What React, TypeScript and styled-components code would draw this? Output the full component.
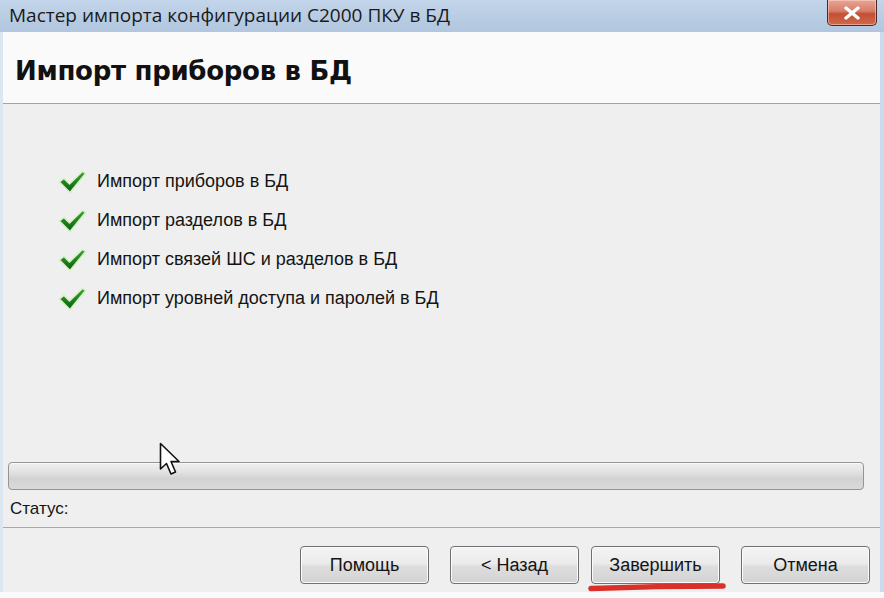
import React from "react";
import styled, { createGlobalStyle } from "styled-components";

const Global = createGlobalStyle`
  html, body { margin: 0; padding: 0; background: #f8f8f8; }
  body { width: 884px; height: 598px; overflow: hidden; }
  * { box-sizing: border-box; }
`;

const Window = styled.div`
  position: relative;
  width: 884px;
  height: 598px;
  display: flex;
  flex-direction: column;
  background: #efefef;
  font-family: "Liberation Sans", Arial, sans-serif;
  color: #111;
`;

const TitleBar = styled.div`
  height: 32px;
  flex: none;
  display: flex;
  align-items: flex-start;
  justify-content: space-between;
  background: linear-gradient(180deg, #c3d5ea 0%, #b7cbe2 60%, #b2c7df 100%);
`;

const TitleText = styled.div`
  font-family: "Open Sans", "Noto Sans", sans-serif;
  font-size: 19px;
  letter-spacing: 0px;
  line-height: 30px;
  padding-left: 9px;
  color: #1a1a1a;
  white-space: nowrap;
`;

const CloseButton = styled.div`
  width: 50px;
  height: 26px;
  margin-right: 7px;
  border: 1px solid #4a2a2a;
  border-top: none;
  border-radius: 0 0 5px 5px;
  background: linear-gradient(180deg, #e9a595 0%, #d77d68 45%, #c44f34 55%, #d0684c 100%);
  display: flex;
  align-items: center;
  justify-content: center;
  box-shadow: inset 0 0 0 1px rgba(255, 220, 210, 0.5);
`;

const Body = styled.div`
  flex: 1;
  display: flex;
  flex-direction: column;
  border-left: 3px solid #dbe6f2;
  border-right: 4px solid #c8dbef;
  min-height: 0;
`;

const Header = styled.div`
  height: 72px;
  flex: none;
  background: #fafafa;
  border-bottom: 1px solid #a3a3a3;
  display: flex;
  align-items: center;
  padding-left: 12px;
  padding-top: 6px;
`;

const HeaderTitle = styled.h1`
  margin: 0;
  font-family: "DejaVu Sans", Verdana, sans-serif;
  font-weight: bold;
  font-size: 26px;
  letter-spacing: -0.3px;
  color: #111;
`;

const Main = styled.div`
  flex: 1;
  display: flex;
  flex-direction: column;
  padding: 58px 0 0 5px;
  min-height: 0;
`;

const StepList = styled.div`
  display: flex;
  flex-direction: column;
  padding-left: 50px;
`;

const StepRow = styled.div`
  height: 39px;
  display: flex;
  align-items: center;
  gap: 10px;
`;

const StepText = styled.span`
  font-size: 18px;
  color: #141414;
`;

const Progress = styled.div`
  margin: auto 16px 0 0;
  height: 28px;
  border: 1px solid #959595;
  border-radius: 4px;
  background: linear-gradient(180deg, #f0f0f0 0%, #e2e2e2 35%, #d2d2d2 60%, #dadada 100%);
  box-shadow: inset 0 1px 0 #fafafa;
`;

const StatusRow = styled.div`
  height: 38px;
  display: flex;
  align-items: center;
  font-size: 17px;
  color: #141414;
  border-bottom: 1px solid #a8a8a8;
  margin-left: -5px;
  padding-left: 7px;
`;

const Footer = styled.div`
  height: 64px;
  flex: none;
  display: flex;
  align-items: center;
  justify-content: flex-end;
  padding-right: 10px;
  padding-top: 10px;
`;

const Button = styled.div<{ $gap: number }>`
  position: relative;
  width: 129px;
  height: 38px;
  margin-left: ${(p) => p.$gap}px;
  border: 1px solid #707070;
  border-radius: 4px;
  background: linear-gradient(180deg, #f4f4f4 0%, #ebebeb 45%, #dddddd 55%, #d3d3d3 100%);
  box-shadow: inset 0 0 0 1px #fbfbfb;
  display: flex;
  align-items: center;
  justify-content: center;
  font-size: 18px;
  color: #141414;
`;

const Underline = styled.svg`
  position: absolute;
  left: -4px;
  top: 36px;
  overflow: visible;
`;

const BottomStrip = styled.div`
  height: 6px;
  flex: none;
  background: #fafafa;
`;

const Cursor = styled.svg`
  position: absolute;
  left: 159px;
  top: 442px;
`;

const CheckIcon = () => (
  <svg width="29" height="24" viewBox="0 0 29 24">
    <defs>
      <linearGradient id="chk" x1="0" y1="0" x2="0" y2="1">
        <stop offset="0" stopColor="#36a532" />
        <stop offset="1" stopColor="#0b5e0e" />
      </linearGradient>
    </defs>
    <path
      d="M1.5 12 L6 8.5 L11.5 14 L24.5 1.5 L27.5 3.5 L12 22.5 Z"
      fill="url(#chk)"
      stroke="#d6efbf"
      strokeWidth="1.5"
      strokeLinejoin="round"
    />
  </svg>
);

const steps = [
  "Импорт приборов в БД",
  "Импорт разделов в БД",
  "Импорт связей ШС и разделов в БД",
  "Импорт уровней доступа и паролей в БД",
];

export default function App() {
  return (
    <>
      <Global />
      <Window>
        <TitleBar>
          <TitleText>Мастер импорта конфигурации С2000 ПКУ в БД</TitleText>
          <CloseButton>
            <svg width="18" height="14" viewBox="0 0 18 14">
              <path
                d="M3 2 L15 12 M15 2 L3 12"
                stroke="#ffffff"
                strokeWidth="3.4"
                strokeLinecap="round"
              />
            </svg>
          </CloseButton>
        </TitleBar>
        <Body>
          <Header>
            <HeaderTitle>Импорт приборов в БД</HeaderTitle>
          </Header>
          <Main>
            <StepList>
              {steps.map((s) => (
                <StepRow key={s}>
                  <CheckIcon />
                  <StepText>{s}</StepText>
                </StepRow>
              ))}
            </StepList>
            <Progress />
            <StatusRow>Статус:</StatusRow>
          </Main>
          <Footer>
            <Button $gap={0}>Помощь</Button>
            <Button $gap={21}>&lt; Назад</Button>
            <Button $gap={12}>
              Завершить
              <Underline width="138" height="8" viewBox="0 0 138 8">
                <path d="M3 5.5 Q70 3 135 3" stroke="#d9302a" strokeWidth="5.5" strokeLinecap="round" fill="none" />
              </Underline>
            </Button>
            <Button $gap={21}>Отмена</Button>
          </Footer>
        </Body>
        <BottomStrip />
        <Cursor width="22" height="36" viewBox="0 0 22 36">
          <path
            d="M1.5 1.5 L1.5 27 L7.5 21.5 L12 32 L16.5 30 L12 19.5 L20 19.5 Z"
            fill="#ffffff"
            stroke="#111111"
            strokeWidth="1.6"
            strokeLinejoin="round"
          />
        </Cursor>
      </Window>
    </>
  );
}
